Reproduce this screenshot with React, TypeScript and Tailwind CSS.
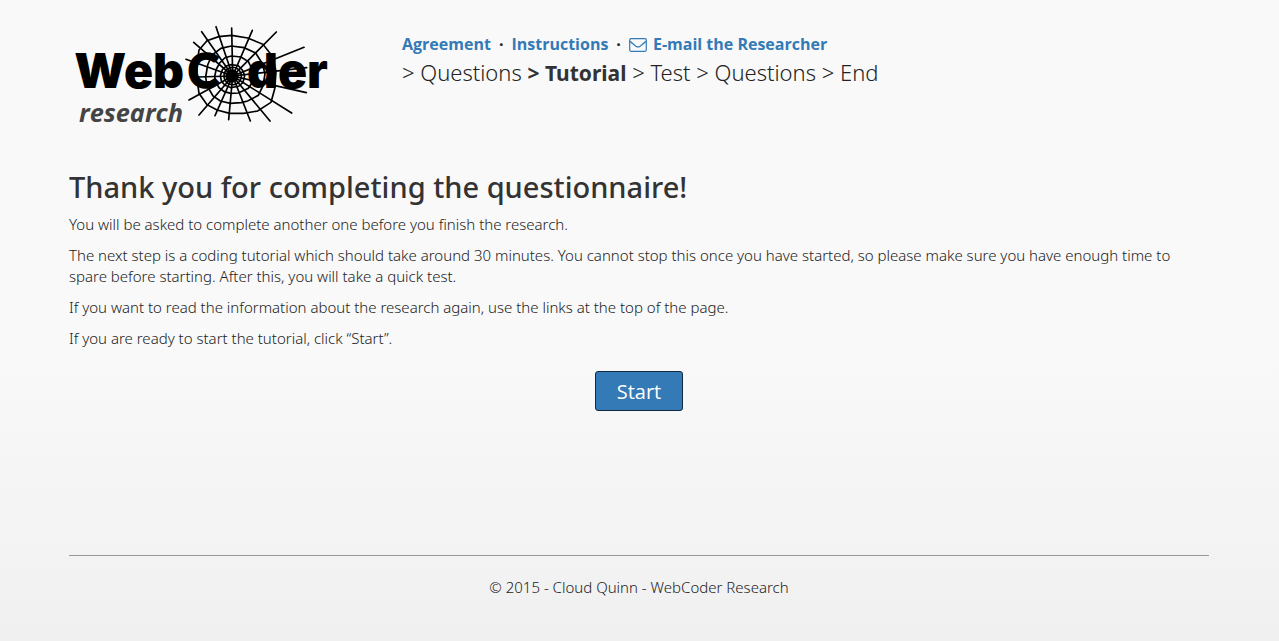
import React from 'react';

const spokes: [number, number][] = [
  [375, 133], [398, 82], [422, 50], [465, 35], [512, 39], [574, 46], [646, 51],
  [729, 97], [737, 158], [736, 233], [692, 294], [627, 318], [568, 318],
  [503, 314], [462, 302], [414, 300], [384, 255], [410, 186],
];

const rings = [
  'M512 61 L560 69 L606 88 L636 126 L645 170 L641 222 L630 262 L590 288 L548 295 L506 295 L468 285 L438 269 L414 235 L408 190 L408 148 L414 105 L438 77 L473 65Z',
  'M511 93 L549 98 L584 114 L604 146 L612 176 L606 212 L592 241 L560 258 L540 263 L508 265 L478 258 L456 243 L438 212 L434 186 L440 150 L453 120 L480 100Z',
  'M511 123 L540 126 L562 140 L574 164 L578 182 L572 205 L562 220 L532 234 L509 235 L490 230 L474 218 L464 200 L461 184 L466 162 L476 144 L492 128Z',
  'M511 149 L532 152 L545 166 L551 182 L546 202 L533 214 L510 218 L491 210 L481 198 L478 182 L484 164 L496 153Z',
];

function Logo() {
  return (
    <svg
      viewBox="0 0 840 360"
      role="img"
      aria-label="WebCoder research"
      className="h-[120px] w-[280px]"
    >
      <g fill="none" stroke="#000" strokeWidth="5" strokeLinecap="round">
        {spokes.map(([x, y]) => (
          <line key={`${x}-${y}`} x1="515" y1="183" x2={x} y2={y} />
        ))}
        {rings.map((d) => (
          <path key={d} d={d} />
        ))}
        <circle cx="515" cy="183" r="26" strokeDasharray="7 3" />
      </g>
      <circle cx="513" cy="183" r="20" />
      <g fontFamily="Inter, sans-serif" fontWeight="900" fontSize="144">
        <text x="40" y="220">Web</text>
        <text x="380" y="220" fontFamily="Lato, sans-serif" fontSize="142" stroke="#000" strokeWidth="5">C</text>
        <text x="558" y="220">der</text>
      </g>
      <text
        x="54"
        y="322"
        fill="#444"
        fontFamily="'Open Sans', sans-serif"
        fontStyle="italic"
        fontWeight="700"
        fontSize="76"
      >
        research
      </text>
    </svg>
  );
}

function EnvelopeIcon() {
  return (
    <svg
      viewBox="0 0 18 14"
      aria-hidden="true"
      className="mr-1.5 inline-block h-3.5 w-[18px] align-[-2px]"
      fill="none"
      stroke="currentColor"
      strokeWidth="1.2"
      strokeLinejoin="round"
    >
      <rect x="0.7" y="0.7" width="16.6" height="12.6" rx="1.2" />
      <path d="M1 3.2 C3.5 5.6 5.4 6.8 7 8.2 C8.4 9.3 9.6 9.3 11 8.2 C12.6 6.8 14.5 5.6 17 3.2" />
    </svg>
  );
}

const link = 'text-[#337ab7] hover:underline';

export default function App() {
  return (
    <div className="min-h-screen bg-linear-to-b from-[#f9f9f9] from-55% to-[#f0f0f0] pr-4 pl-[15px] font-['Noto_Sans',sans-serif] text-[15px] font-light text-[#222]">
      <div className="mx-auto max-w-[1140px]">
        <header className="flex gap-[61px] pt-[15px]">
          <a href="#home" className="-ml-2 shrink-0">
            <Logo />
          </a>
          <div className="pt-[17px]">
            <nav aria-label="Study information" className="flex items-center gap-2 font-['Open_Sans',sans-serif] text-base leading-6 font-bold">
              <a href="#agreement" className={link}>Agreement</a>
              <span>·</span>
              <a href="#instructions" className={link}>Instructions</a>
              <span>·</span>
              <a href="#email" className={link}>
                <EnvelopeIcon />
                E-mail the Researcher
              </a>
            </nav>
            <p className="text-[22px] leading-8">
              &gt; Questions <strong className="text-[21px] font-bold text-[#333]">&gt; Tutorial</strong> &gt; Test &gt; Questions &gt; End
            </p>
          </div>
        </header>

        <main className="pt-8">
          <h1 className="mb-[7px] text-[29px] leading-10 font-medium text-[#333]">
            Thank you for completing the questionnaire!
          </h1>
          <div className="space-y-2.5 leading-[21px]">
            <p>You will be asked to complete another one before you finish the research.</p>
            <p>
              The next step is a coding tutorial which should take around 30 minutes. You cannot stop this once you
              have started, so please make sure you have enough time to spare before starting. After this, you will
              take a quick test.
            </p>
            <p>If you want to read the information about the research again, use the links at the top of the page.</p>
            <p>If you are ready to start the tutorial, click “Start”.</p>
          </div>
          <div className="mt-[22px] flex justify-center">
            <button
              type="button"
              className="h-10 w-[88px] rounded-[3px] border border-[#122b40] bg-[#337ab7] pt-0.5 font-['Open_Sans',sans-serif] text-xl leading-8 font-normal text-white"
            >
              Start
            </button>
          </div>
        </main>

        <footer className="mt-36 border-t border-[#999] pt-[21px] pb-10 text-center leading-[21px]">
          <p>© 2015 - Cloud Quinn - WebCoder Research</p>
        </footer>
      </div>
    </div>
  );
}
